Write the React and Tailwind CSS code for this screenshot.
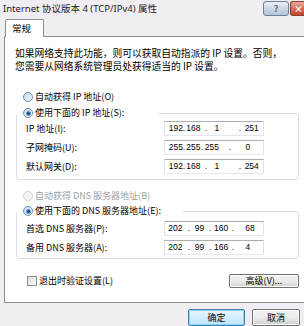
import React from "react";

const F = "font-['Noto_Sans_CJK_SC','Noto_Sans',sans-serif]";

function Radio({ checked, disabled }) {
  return (
    <span
      className={
        "flex items-center justify-center w-[10px] h-[10px] rounded-full border shrink-0 " +
        (disabled
          ? "border-[#cfcfcf] bg-[#f4f4f4]"
          : "border-[#6b8db3] bg-gradient-to-br from-[#bcd6ee] to-[#f4f8fc]")
      }
    >
      {checked && (
        <span className="w-[5px] h-[5px] rounded-full bg-[#1f4a7c] border border-[#5b93c9]" />
      )}
    </span>
  );
}

function IPBox({ tokens }) {
  // tokens: [text, centerX relative to box left]
  let prev = 1;
  return (
    <div className="w-[100px] h-[15px] border border-[#abadb3] border-x-[#dfe2e8] border-b-[#e3e9ef] bg-white flex items-center text-[8.5px] leading-none font-['Liberation_Sans',sans-serif] text-black">
      {tokens.map(([t, c], i) => {
        const w = t.length * 4.2 + 1;
        const ml = c - w / 2 - prev;
        prev = c + w / 2;
        return (
          <span key={i} className="text-center shrink-0" style={{ width: w, marginLeft: ml }}>
            {t}
          </span>
        );
      })}
    </div>
  );
}

function Row({ label, tokens }) {
  return (
    <div className="flex items-center h-[15px]">
      <span className="w-[138px] shrink-0">{label}</span>
      <IPBox tokens={tokens} />
    </div>
  );
}

function Button({ children, def, className = "" }) {
  return (
    <div
      className={
        "flex items-center justify-center rounded-[2px] border " +
        (def
          ? "border-[#3c7fb1] bg-gradient-to-b from-[#eaf6fd] to-[#bee6fd] shadow-[inset_0_0_0_1px_#8fd2f4]"
          : "border-[#707070] bg-gradient-to-b from-[#f2f2f2] via-[#ebebeb] to-[#cfcfcf] shadow-[inset_0_0_0_1px_#fcfcfc]") +
        " " +
        className
      }
    >
      {children}
    </div>
  );
}

export default function App() {
  const ip = [["192", 11.5], [".", 20], ["168", 29], [".", 42], ["1", 53], [".", 76], ["251", 87.5]];
  const mask = [["255", 11.5], [".", 20], ["255", 29], [".", 38], ["255", 47.5], [".", 66], ["0", 84]];
  const gw = [["192", 11.5], [".", 20], ["168", 29], [".", 42], ["1", 53], [".", 76], ["254", 87.5]];
  const d1 = [["202", 11], [".", 25], ["99", 35.5], [".", 46], ["160", 57], [".", 69], ["68", 86]];
  const d2 = [["202", 11], [".", 25], ["99", 35.5], [".", 46], ["166", 57], [".", 69], ["4", 84]];

  return (
    <div className={"w-[304px] h-[326px] overflow-hidden bg-[#f0eef2] flex flex-col text-black " + F}>
      {/* title bar */}
      <div className="h-[19px] flex items-start shrink-0">
        <span className="pl-[3px] pt-[2px] text-[9.5px] leading-[14px] font-['Noto_Sans','Noto_Sans_CJK_SC',sans-serif] text-[#1e1e1e] whitespace-nowrap">
          Internet 协议版本 4 (TCP/IPv4) 属性
        </span>
        <div className="ml-auto flex gap-[1px] pt-[1px]">
          <div className="w-[26px] h-[15px] rounded-[3px] border border-[#6f7f94] bg-gradient-to-b from-[#e9eef5] via-[#cdd8e6] to-[#b3c4d9] flex items-center justify-center text-[9px] leading-none text-[#596a80] font-bold">
            ?
          </div>
          <div className="w-[14px] h-[15px] rounded-l-[3px] border border-r-0 border-[#8c3b2c] bg-gradient-to-b from-[#e9a99b] via-[#d4705c] to-[#c0432c] flex items-center pl-[3px] text-[9px] leading-none text-white font-bold">
            ×
          </div>
        </div>
      </div>

      {/* tabs */}
      <div className="h-[17px] flex pl-[5px] shrink-0">
        <div className="relative z-10 w-[39px] h-[18px] border border-b-0 border-[#898c95] bg-white rounded-t-[2px] pl-[6px] text-[9.5px] leading-[16px]">
          常规
        </div>
      </div>

      {/* panel */}
      <div className="ml-[4px] w-[303px] h-[267px] shrink-0 border border-[#898c95] bg-white flex flex-col text-[9px] leading-[12px]">
        <p className="pl-[10px] pt-[10px] text-[9.75px] leading-[13px] whitespace-nowrap">
          如果网络支持此功能，则可以获取自动指派的 IP 设置。否则，
          <br />
          您需要从网络系统管理员处获得适当的 IP 设置。
        </p>

        <div className="mt-[18px] ml-[18px] flex items-center gap-[2px] h-[12px]">
          <Radio />
          <span>自动获得 IP 地址(O)</span>
        </div>

        <fieldset className="mt-[4px] ml-[11px] w-[283px] border border-[#d5dfe5] rounded-[3px] px-0 pt-[0px] pb-[5px]">
          <legend className="w-[141px] bg-white">
            <div className="pl-[6px] flex items-center gap-[2px] h-[12px]">
              <Radio checked />
              <span>使用下面的 IP 地址(S):</span>
            </div>
          </legend>
          <div className="pl-[9px] pt-[2px] flex flex-col gap-[4px]">
            <Row label="IP 地址(I):" tokens={ip} />
            <Row label="子网掩码(U):" tokens={mask} />
            <Row label="默认网关(D):" tokens={gw} />
          </div>
        </fieldset>

        <div className="mt-[10px] ml-[18px] flex items-center gap-[2px] h-[12px] text-[#a0a0a0]">
          <Radio disabled />
          <span>自动获得 DNS 服务器地址(B)</span>
        </div>

        <fieldset className="mt-[3px] ml-[11px] w-[283px] border border-[#d5dfe5] rounded-[3px] px-0 pb-[3px]">
          <legend className="w-[166px] bg-white">
            <div className="pl-[6px] flex items-center gap-[2px] h-[12px]">
              <Radio checked />
              <span>使用下面的 DNS 服务器地址(E):</span>
            </div>
          </legend>
          <div className="pl-[9px] pt-[4px] flex flex-col gap-[4px]">
            <Row label="首选 DNS 服务器(P):" tokens={d1} />
            <Row label="备用 DNS 服务器(A):" tokens={d2} />
          </div>
        </fieldset>

        <div className="mt-[15px] ml-[22px] w-[272px] flex items-center h-[14px]">
          <span className="w-[10px] h-[10px] border border-[#8f8f8f] bg-gradient-to-br from-[#dcdcdc] to-[#f8f8f8] shrink-0" />
          <span className="ml-[2px]">退出时验证设置(L)</span>
          <Button className="ml-auto w-[70px] h-[14px]">高级(V)...</Button>
        </div>
      </div>

      {/* bottom buttons */}
      <div className="flex mt-[6px] pl-[188px] gap-[7px] text-[9px]">
        <Button def className="w-[57px] h-[17px]">确定</Button>
        <Button className="w-[48px] h-[17px]">取消</Button>
      </div>
    </div>
  );
}
